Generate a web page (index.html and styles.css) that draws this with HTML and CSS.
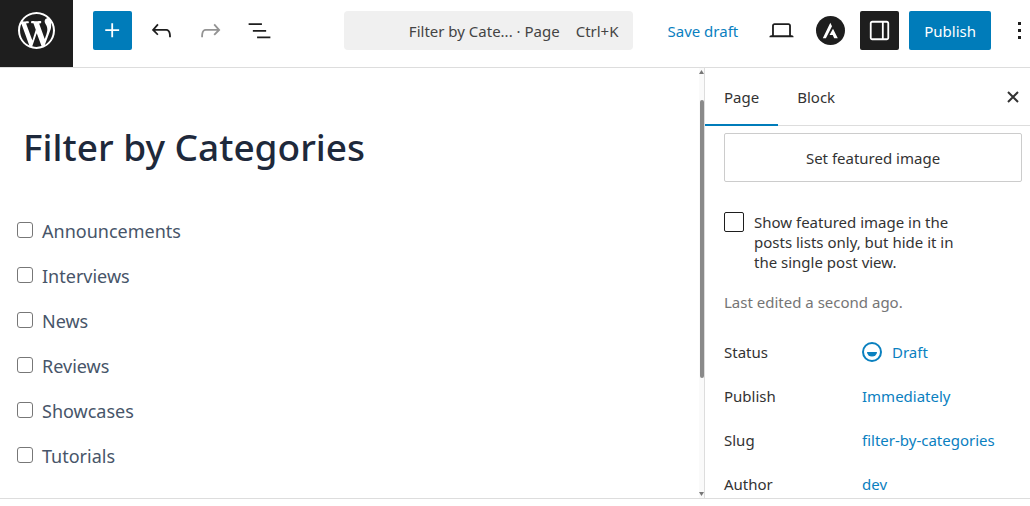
FILE: index.html
```html
<!DOCTYPE html>
<html lang="en">
<head>
	<meta charset="UTF-8">
	<meta name="viewport" content="width=device-width, initial-scale=1">
	<title>Filter by Categories</title>
	<link rel="stylesheet" href="styles.css">
</head>
<body>
	<!-- top bar -->
	<header class="header">
		<a class="logo" href="#" aria-label="View Pages">
			<svg width="37" height="37" viewBox="0 0 20 20"><path fill="#fff" d="M20 10c0-5.51-4.49-10-10-10C4.48 0 0 4.49 0 10c0 5.52 4.48 10 10 10 5.51 0 10-4.48 10-10zM7.78 15.37L4.37 6.22c.55-.02 1.17-.08 1.17-.08.5-.06.44-1.13-.06-1.11 0 0-1.45.11-2.37.11-.18 0-.37 0-.58-.01C4.12 2.69 6.87 1.11 10 1.11c2.33 0 4.45.87 6.05 2.34-.68-.11-1.65.39-1.65 1.58 0 .74.45 1.36.9 2.1.35.61.55 1.36.55 2.46 0 1.49-1.4 5-1.4 5l-3.03-8.37c.54-.02.82-.17.82-.17.5-.05.44-1.25-.06-1.22 0 0-1.44.12-2.38.12-.87 0-2.33-.12-2.33-.12-.5-.03-.56 1.2-.06 1.22l.92.08 1.26 3.41zM17.41 10c.24-.64.74-1.87.43-4.25.7 1.29 1.05 2.71 1.05 4.25 0 3.29-1.73 6.24-4.4 7.78.97-2.59 1.94-5.2 2.92-7.78zM6.1 18.09C3.12 16.65 1.11 13.53 1.11 10c0-1.3.23-2.48.72-3.59C3.25 10.3 4.67 14.2 6.1 18.09zm4.03-6.63l2.58 6.98c-.86.29-1.76.45-2.71.45-.79 0-1.57-.11-2.29-.33.81-2.38 1.62-4.74 2.42-7.1z"/></svg>
		</a>
		<div class="tools">
			<button class="btn btn-primary" aria-label="Add block">
				<svg width="29" height="29" viewBox="0 0 24 24"><path fill="currentColor" d="M11 12.5V17.5H12.5V12.5H17.5V11H12.5V6H11V11H6V12.5H11Z"/></svg>
			</button>
			<button class="btn" aria-label="Undo">
				<svg width="29" height="29" viewBox="0 0 24 24"><path fill="currentColor" d="M18.3 11.7c-.6-.6-1.4-.9-2.3-.9H6.7l2.9-3.3-1.1-1-4.5 5L8.5 16l1-1-2.7-2.7H16c.5 0 .9.2 1.3.5 1 1 1 3.4 1 4.5v.3h1.5v-.2c0-1.5 0-4.3-1.5-5.7z"/></svg>
			</button>
			<button class="btn" aria-label="Redo" disabled>
				<svg width="29" height="29" viewBox="0 0 24 24"><path fill="currentColor" d="M15.6 6.5l-1.1 1 2.9 3.3H8c-.9 0-1.7.3-2.3.9-1.4 1.5-1.4 4.2-1.4 5.6v.2h1.5v-.3c0-1.1 0-3.5 1-4.5.3-.3.7-.5 1.3-.5h9.2L14.5 15l1.1 1.1 4.6-4.6-4.6-5z"/></svg>
			</button>
			<button class="btn" aria-label="Document Overview">
				<svg width="29" height="29" viewBox="0 0 24 24"><path fill="currentColor" d="M3 6h11v1.5H3V6Zm3.500 5.500h11V13h-11v-1.500ZM21 17H10v1.500h11V17Z"/></svg>
			</button>
		</div>
		<button class="command">
			<span>Filter by Cate... · Page</span>
			<span>Ctrl+K</span>
		</button>
		<div class="settings">
			<button class="save">Save draft</button>
			<button class="btn" aria-label="View">
				<svg width="29" height="29" viewBox="0 0 24 24"><path fill="currentColor" d="M20.5 16h-.7V8c0-1.100-.9-2-2-2H6.200c-1.100 0-2 .9-2 2v8h-.7c-.8 0-1.500.7-1.500 1.500h20c0-.8-.7-1.500-1.500-1.500zM5.700 8c0-.3.2-.5.5-.5h11.600c.3 0 .5.2.5.5v8H5.700V8z"/></svg>
			</button>
			<button class="btn" aria-label="Astra Settings">
				<svg width="29" height="29" viewBox="0 0 29 29"><circle cx="14.500" cy="14.500" r="14.500" fill="#1e1e1e"/><path fill="#fff" d="M14.300 6.700l1.700 3.500-6.100 12H6.800zM17 12.800l4.800 9.400h-3.600l-1.500-3.100h-3.200z"/></svg>
			</button>
			<button class="btn btn-dark" aria-label="Settings" aria-pressed="true">
				<svg width="29" height="29" viewBox="0 0 24 24"><path fill="currentColor" fill-rule="evenodd" d="M18 4H6c-1.100 0-2 .9-2 2v12c0 1.100.9 2 2 2h12c1.100 0 2-.9 2-2V6c0-1.100-.9-2-2-2zm-4 14.500H6c-.3 0-.5-.2-.5-.5V6c0-.3.2-.5.5-.5h8v13zm4.500-.5c0 .3-.2.5-.5.5h-2.500v-13H18c.3 0 .5.200.5.500v12z"/></svg>
			</button>
			<button class="btn btn-primary btn-publish">Publish</button>
			<button class="btn btn-more" aria-label="Options">
				<svg width="4" height="20" viewBox="0 0 4 20"><path fill="currentColor" d="M0 1h3v3H0zM0 8h3v3H0zM0 15h3v3H0z"/></svg>
			</button>
		</div>
	</header>

	<div class="body">
		<!-- page content -->
		<main class="editor">
			<h1>Filter by Categories</h1>
			<ul class="categories">
				<li><label><input type="checkbox">Announcements</label></li>
				<li><label><input type="checkbox">Interviews</label></li>
				<li><label><input type="checkbox">News</label></li>
				<li><label><input type="checkbox">Reviews</label></li>
				<li><label><input type="checkbox">Showcases</label></li>
				<li><label><input type="checkbox">Tutorials</label></li>
			</ul>
		</main>
		<div class="scrollbar" aria-hidden="true">
			<svg width="5" height="4" viewBox="0 0 5 4"><path fill="#777" d="M2.500 0L5 4H0z"/></svg>
			<div class="track"><div class="thumb"></div></div>
			<svg width="5" height="4" viewBox="0 0 5 4"><path fill="#777" d="M0 0h5L2.500 4z"/></svg>
		</div>

		<!-- settings panel -->
		<aside class="sidebar">
			<div class="tabs">
				<button class="tab active">Page</button>
				<button class="tab">Block</button>
				<button class="close" aria-label="Close Settings">
					<svg width="14" height="14" viewBox="0 0 14 14"><path stroke="currentColor" stroke-width="2" d="M2 2l10 10M12 2L2 12"/></svg>
				</button>
			</div>
			<div class="panel">
				<button class="featured">Set featured image</button>
				<label class="hide-image">
					<input type="checkbox">
					<span>Show featured image in the posts lists only, but hide it in the single post view.</span>
				</label>
				<p class="edited">Last edited a second ago.</p>
				<dl class="rows">
					<dt>Status</dt>
					<dd><button class="value">
						<svg width="20" height="20" viewBox="0 0 20 20"><circle cx="10" cy="10" r="9" fill="none" stroke="currentColor" stroke-width="2"/><path fill="currentColor" d="M5 10h10a5 4.500 0 0 1-10 0z"/></svg>
						Draft
					</button></dd>
					<dt>Publish</dt>
					<dd><button class="value">Immediately</button></dd>
					<dt>Slug</dt>
					<dd><button class="value">filter-by-categories</button></dd>
					<dt>Author</dt>
					<dd><button class="value">dev</button></dd>
				</dl>
			</div>
		</aside>
	</div>
	<footer class="footer"></footer>
</body>
</html>
```
FILE: styles.css
```css
*{margin:0;padding:0;box-sizing:border-box;}
body{display:flex;flex-direction:column;height:100vh;overflow:hidden;background:#fff;color:#333;font:15px/20px "Noto Sans",sans-serif;}
button{border:0;background:none;color:inherit;font:inherit;cursor:pointer;}
svg{display:block;flex:none;}

/* top bar */
.header{display:flex;flex:none;height:68px;border-bottom:1px solid #ddd;}
.logo{display:flex;justify-content:center;width:73px;padding-top:12px;background:#1e1e1e;}
.tools,.settings{display:flex;gap:10px;padding-top:11px;}
.tools{padding-left:20px;}
.btn{display:flex;align-items:center;justify-content:center;flex:none;width:39px;height:39px;border-radius:2px;color:#1e1e1e;}
.btn:disabled{color:#949494;}
.btn-primary{background:#007cba;color:#fff;}
.btn-dark{background:#1e1e1e;color:#fff;}
.btn-publish{width:auto;padding:0 15px;}
.btn-more{width:29px;padding-left:8px;}
.command{display:flex;align-items:center;justify-content:flex-end;gap:16px;width:289px;height:39px;margin:11px 34px 0 auto;padding:0 15px;border-radius:4px;background:#f0f0f0;color:#444;}
.save{height:39px;margin-right:14px;color:#0a80bf;}

.body{display:flex;flex:1;min-height:0;}

/* page content */
.editor{flex:1;min-width:0;padding:54px 17px 0;overflow:hidden;}
.editor h1{padding-left:6px;color:#1e293b;font-size:37px;line-height:50px;font-weight:500;}
.categories{margin-top:47px;list-style:none;color:#475569;font-size:18px;line-height:25px;}
.categories li{margin-bottom:20px;}
.categories label{display:inline-flex;gap:9px;}
input[type=checkbox]{appearance:none;flex:none;background:#fff;}
.categories input{width:16px;height:16px;margin-top:3px;border:1px solid #777;border-radius:3px;}

.scrollbar{display:flex;flex-direction:column;align-items:center;flex:none;width:6px;padding:2px 0;border-right:1px solid #ddd;background:#fafafa;}
.track{flex:1;width:4px;padding-top:26px;}
.thumb{height:71%;border-radius:2px;background:#8a8a8a;}

/* settings panel */
.sidebar{flex:none;width:325px;overflow:hidden;}
.tabs{display:flex;height:58px;border-bottom:1px solid #ddd;}
.tab{margin-bottom:-1px;padding:0 19px;}
.tab.active{border-bottom:2px solid #007cba;padding-top:2px;}
.close{margin-left:auto;padding:0 10px;}
.panel{padding:7px 8px 0 19px;}
.featured{width:100%;height:49px;border:1px solid #ccc;border-radius:2px;}
.hide-image{display:flex;gap:10px;margin-top:30px;}
.hide-image input{width:20px;height:20px;border:1px solid #1e1e1e;border-radius:2px;}
.hide-image span{max-width:215px;}
.edited{margin:20px 0 18px;color:#757575;}
.rows{display:grid;grid-template-columns:138px 1fr;grid-auto-rows:44px;align-items:center;}
.value{display:flex;align-items:center;gap:10px;color:#0a80bf;}

.footer{flex:none;height:8px;border-top:1px solid #ddd;}
```
